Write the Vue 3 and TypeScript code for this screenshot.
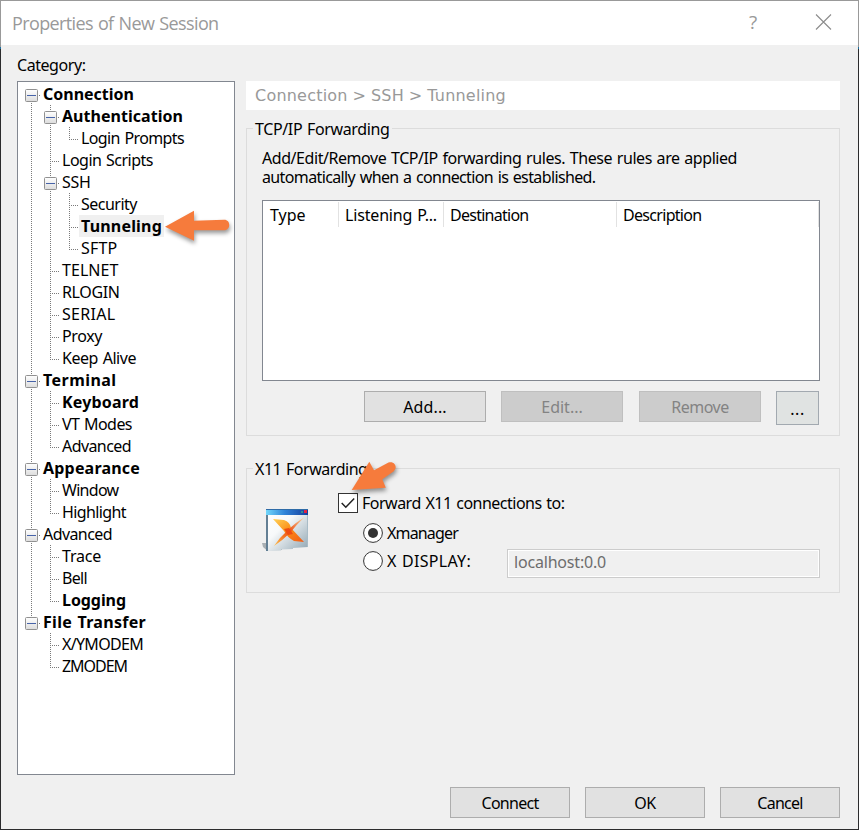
<script setup lang="ts">
import { computed } from 'vue'

interface TreeItem {
  label: string
  level: number
  width: number
  bold?: boolean
  selected?: boolean
}

interface Guide {
  up: boolean
  down: boolean
  branch: boolean
}

// Spreads the letters of a label so that it takes up the given width.
const vFit = {
  mounted(el: HTMLElement, binding: { value: number }) {
    const natural = el.getBoundingClientRect().width
    const count = (el.textContent ?? '').length
    el.style.letterSpacing = `${(binding.value - 0.5 - natural) / count}px`
  },
}

const items: TreeItem[] = [
  { label: 'Connection', level: 0, width: 91.5, bold: true },
  { label: 'Authentication', level: 1, width: 121.5, bold: true },
  { label: 'Login Prompts', level: 2, width: 103.5 },
  { label: 'Login Scripts', level: 1, width: 91.5 },
  { label: 'SSH', level: 1, width: 29 },
  { label: 'Security', level: 2, width: 56.5 },
  { label: 'Tunneling', level: 2, width: 81.5, bold: true, selected: true },
  { label: 'SFTP', level: 2, width: 37 },
  { label: 'TELNET', level: 1, width: 57 },
  { label: 'RLOGIN', level: 1, width: 58 },
  { label: 'SERIAL', level: 1, width: 54 },
  { label: 'Proxy', level: 1, width: 40.5 },
  { label: 'Keep Alive', level: 1, width: 74.5 },
  { label: 'Terminal', level: 0, width: 74, bold: true },
  { label: 'Keyboard', level: 1, width: 77.5, bold: true },
  { label: 'VT Modes', level: 1, width: 70.5 },
  { label: 'Advanced', level: 1, width: 69.5 },
  { label: 'Appearance', level: 0, width: 97.5, bold: true },
  { label: 'Window', level: 1, width: 57 },
  { label: 'Highlight', level: 1, width: 64.5 },
  { label: 'Advanced', level: 0, width: 69.5 },
  { label: 'Trace', level: 1, width: 39.5 },
  { label: 'Bell', level: 1, width: 25.5 },
  { label: 'Logging', level: 1, width: 64.5, bold: true },
  { label: 'File Transfer', level: 0, width: 103.5, bold: true },
  { label: 'X/YMODEM', level: 1, width: 81.5 },
  { label: 'ZMODEM', level: 1, width: 65.5 },
]

function continues(index: number, level: number): boolean {
  for (let i = index + 1; i < items.length; i++) {
    if (items[i].level < level) return false
    if (items[i].level === level) return true
  }
  return false
}

const rows = computed(() =>
  items.map((item, index) => {
    const guides: Guide[] = []
    for (let level = 0; level <= item.level; level++) {
      const more = continues(index, level)
      const own = level === item.level
      guides.push({ up: own ? index > 0 : more, down: more, branch: own })
    }
    const next = items[index + 1]
    return { ...item, guides, parent: !!next && next.level > item.level }
  }),
)

const columns = [
  { label: 'Type', width: 36, cls: 'c-type' },
  { label: 'Listening P...', width: 92.5, cls: 'c-port' },
  { label: 'Destination', width: 79, cls: 'c-dest' },
  { label: 'Description', width: 79, cls: 'c-desc' },
]
</script>

<template>
  <div class="dialog">
    <header class="titlebar">
      <span class="title"><span v-fit="207" class="t">Properties of New Session</span></span>
      <span class="help">?</span>
      <svg class="close" width="17" height="17" viewBox="0 0 17 17">
        <path d="M1 .5L16 15.5M16 .5L1 15.5" stroke="#8c8c8c" stroke-width="1.1" fill="none" />
      </svg>
    </header>

    <div class="category"><span v-fit="69" class="t">Category:</span></div>

    <main class="content">
      <div class="tree">
        <div v-for="(row, i) in rows" :key="i" class="row">
          <svg v-for="(g, j) in row.guides" :key="j" class="guide" width="19" height="22" viewBox="0 0 19 22">
            <g stroke="#7a7a7a" stroke-width="1" stroke-dasharray="1 1">
              <path v-if="g.up" d="M9.5 0V12" />
              <path v-if="g.down" d="M9.5 12V22" />
              <path v-if="g.branch" d="M9 12.5H18" />
            </g>
            <g v-if="g.branch && row.parent">
              <rect x="2" y="5" width="15" height="15" fill="#fff" />
              <rect x="3.5" y="6.5" width="12" height="12" rx="1" fill="url(#boxfill)" stroke="#919191" />
              <path d="M5 12.5H14" stroke="#4763a8" />
              <path d="M17 12.5H18" stroke="#7a7a7a" />
            </g>
          </svg>
          <span class="label" :class="{ bold: row.bold, selected: row.selected }"><span v-fit="row.width" class="t">{{ row.label }}</span></span>
        </div>
        <svg class="arrow arrow-tree" width="76" height="44" viewBox="160 206 76 44">
          <path d="M165 226.7L194 210.8V220.7L224 219.8C231 219.6 231 230.2 224 230.2H194V240.8Z" />
        </svg>
      </div>

      <section class="page">
        <div class="crumbs"><span v-fit="251.5" class="t">Connection &gt; SSH &gt; Tunneling</span></div>

        <fieldset class="group tcp">
          <legend><span v-fit="135" class="t">TCP/IP Forwarding</span></legend>
          <div class="desc">
            <div class="line"><span v-fit="475.5" class="t">Add/Edit/Remove TCP/IP forwarding rules. These rules are applied</span></div>
            <div class="line"><span v-fit="334" class="t">automatically when a connection is established.</span></div>
          </div>
          <div class="list">
            <div class="head">
              <div v-for="c in columns" :key="c.label" class="col" :class="c.cls">
                <span v-fit="c.width" class="t">{{ c.label }}</span>
              </div>
            </div>
          </div>
          <div class="actions">
            <button class="btn"><span v-fit="44" class="t">Add...</span></button>
            <button class="btn off"><span v-fit="42" class="t">Edit...</span></button>
            <button class="btn off remove"><span v-fit="58" class="t">Remove</span></button>
            <button class="btn more"><span v-fit="15" class="t">...</span></button>
          </div>
        </fieldset>

        <fieldset class="group x11">
          <legend><span v-fit="113" class="t">X11 Forwarding</span></legend>
          <div class="x11-body">
            <svg class="xicon" width="48" height="45" viewBox="0 0 48 45">
              <defs>
                <linearGradient id="bar" x1="0" x2="1">
                  <stop offset="0" stop-color="#72d8fb" /><stop offset=".45" stop-color="#2f83d8" /><stop offset="1" stop-color="#153f9c" />
                </linearGradient>
                <linearGradient id="pane" x1="0" y1="0" x2="1" y2="1">
                  <stop offset="0" stop-color="#fff" /><stop offset=".4" stop-color="#f7f9fa" /><stop offset="1" stop-color="#8fa5b2" />
                </linearGradient>
                <linearGradient id="cross" x1="0" y1="0" x2="1" y2="1">
                  <stop offset="0" stop-color="#ffd257" /><stop offset=".5" stop-color="#fa8b16" /><stop offset="1" stop-color="#f25b16" />
                </linearGradient>
                <linearGradient id="thin" x1="1" y1="0" x2="0" y2="1">
                  <stop offset="0" stop-color="#f7dfb0" /><stop offset=".5" stop-color="#ed4d11" /><stop offset="1" stop-color="#ffc34e" />
                </linearGradient>
              </defs>
              <path d="M0 35H7V41L20 40V42L5 42.5L1 39Z" fill="#a9afb3" />
              <path d="M4 1H46V39L31 40V41L19 41.5V42.5L4 43Z" fill="url(#pane)" />
              <path d="M4 1H6V43H4Z" fill="#637f94" />
              <path d="M45 7H46V39H45Z" fill="#a9bcc7" />
              <path d="M4 1H46V7H4Z" fill="url(#bar)" />
              <path d="M4 1H46V2H4Z" fill="#2e6ba7" />
              <path d="M39 3H41V5H39Z" fill="#338e92" />
              <path d="M42 2H45V5H42Z" fill="#e02443" />
              <path d="M11 11L22 12Q28 14 29 20L42 34L32 33Q25 29 22 23Z" fill="url(#cross)" />
              <path d="M43 9Q34 17 29 24Q21 32 12 38Q18 29 25 23Q34 14 43 9Z" fill="url(#thin)" />
              <path d="M22 21L27 20L31 26L26 27Z" fill="#ee4c12" />
            </svg>
            <div class="options">
              <label class="check">
                <svg width="20" height="20" viewBox="0 0 20 20">
                  <rect x=".5" y=".5" width="19" height="19" fill="#fff" stroke="#333" />
                  <path d="M3.7 10L7.8 14.2L16.2 5.5" fill="none" stroke="#222" stroke-width="1.5" />
                </svg>
                <span v-fit="203" class="t">Forward X11 connections to:</span>
              </label>
              <label class="radio first">
                <svg width="20" height="20" viewBox="0 0 20 20">
                  <circle cx="10" cy="10" r="9.4" fill="#fff" stroke="#333" /><circle cx="10" cy="10" r="5" fill="#333" />
                </svg>
                <span v-fit="71.5" class="t">Xmanager</span>
              </label>
              <div class="display">
                <label class="radio">
                  <svg width="20" height="20" viewBox="0 0 20 20">
                    <circle cx="10" cy="10" r="9.4" fill="#fff" stroke="#333" />
                  </svg>
                  <span v-fit="84.5" class="t">X DISPLAY:</span>
                </label>
                <div class="field"><span v-fit="92.5" class="t">localhost:0.0</span></div>
              </div>
            </div>
          </div>
          <svg class="arrow arrow-check" width="56" height="46" viewBox="348 456 56 46">
            <path d="M351.7 490L369.3 461.7L374 470.3L388.5 462.6C394 460.3 398.5 467 393.5 471.5L382.3 479.2L385.8 487.7Z" />
          </svg>
        </fieldset>
      </section>
    </main>

    <footer class="footer">
      <button class="btn"><span v-fit="57.5" class="t">Connect</span></button>
      <button class="btn"><span v-fit="22" class="t">OK</span></button>
      <button class="btn"><span v-fit="46" class="t">Cancel</span></button>
    </footer>

    <svg width="0" height="0" class="defs">
      <defs>
        <linearGradient id="boxfill" x1="0" y1="0" x2="0" y2="1">
          <stop offset="0" stop-color="#fff" /><stop offset="1" stop-color="#dcdcdc" />
        </linearGradient>
      </defs>
    </svg>
  </div>
</template>

<style>
body {
  margin: 0;
  background: #f0f0f0;
}
</style>

<style scoped>
.dialog {
  box-sizing: border-box;
  display: flex;
  flex-direction: column;
  width: 859px;
  height: 830px;
  overflow: hidden;
  position: relative;
  border: 1px solid #2b2b2d;
  border-image: linear-gradient(#999 0 15px, #999 47px, #1d6f9f 47px 49px, #2b2b2d 49px) 1;
  background: #f0f0f0;
  color: #000;
  font: 16px/19px "Noto Sans", "Open Sans", sans-serif;
  word-spacing: 1px;
}
.t {
  display: inline-block;
  white-space: pre;
}
.defs {
  position: absolute;
}
.titlebar {
  display: flex;
  align-items: center;
  flex: none;
  height: 44px;
  box-sizing: border-box;
  background: #fff;
  color: #999;
  padding: 0 26px 1px 11px;
}
.title {
  flex: 1;
  padding-top: 1px;
  font: 18px/24px "Open Sans", "Noto Sans", sans-serif;
}
.help {
  width: 12px;
  margin-right: 56px;
  text-align: center;
  font-family: "Open Sans", sans-serif;
  font-size: 19px;
}
.category {
  flex: none;
  height: 36px;
  padding: 11px 0 0 16px;
  box-sizing: border-box;
}
.content {
  display: flex;
  gap: 11px;
  padding: 0 18px 0 16px;
}
.tree {
  box-sizing: border-box;
  flex: none;
  position: relative;
  width: 218px;
  height: 694px;
  padding: 1px 4px;
  border: 1px solid #828790;
  background: #fff;
}
.row {
  display: flex;
  height: 22px;
}
.guide {
  display: block;
  flex: none;
}
.label {
  padding: 0 2px;
  line-height: 22px;
}
.bold {
  font-weight: 700;
}
.selected {
  background: #f0f0f0;
}
.arrow {
  position: absolute;
  fill: #f67b3c;
  filter: drop-shadow(1px 3px 2px rgba(0, 0, 0, 0.4));
}
.arrow-tree {
  left: 142px;
  top: 124px;
}
.page {
  flex: 1;
}
.crumbs {
  height: 29px;
  padding-left: 9px;
  background: #fff;
  color: #999;
  font: 16px/30px "DejaVu Sans", sans-serif;
  word-spacing: -0.5px;
}
.group {
  position: relative;
  box-sizing: border-box;
  margin: 0;
  min-width: 0;
  border: 1px solid #dcdcdc;
  padding: 0 19px 0 15px;
}
.group legend {
  margin-left: -9px;
  padding: 0 2px;
  height: 19px;
  line-height: 21px;
}
.tcp {
  height: 317px;
  margin-top: 9px;
}
.desc {
  padding: 11px 0 13px;
}
.line {
  height: 19px;
}
.list {
  box-sizing: border-box;
  width: 558px;
  height: 181px;
  border: 1px solid #828790;
  background: #fff;
}
.head {
  display: flex;
  padding-top: 1px;
}
.col {
  box-sizing: border-box;
  height: 25px;
  padding-left: 6px;
  line-height: 26px;
  border-right: 1px solid #e2e2e2;
}
.c-type {
  width: 76px;
  padding-left: 7px;
}
.c-port {
  width: 105px;
}
.c-dest {
  width: 173px;
}
.c-desc {
  width: 202px;
}
.actions {
  display: flex;
  gap: 15px;
  margin: 10px 0 0 102px;
}
.btn {
  box-sizing: border-box;
  width: 122px;
  height: 31px;
  padding: 2px 0 0;
  border: 1px solid #adadad;
  background: #e1e1e1;
  color: #000;
  font: inherit;
}
.off {
  border-color: #bfbfbf;
  background: #ccc;
  color: #838383;
}
.remove {
  margin-left: 1px;
}
.more {
  width: 43px;
  height: 34px;
  padding-top: 3px;
  border-color: #a2a9b0;
  background: #e0e3e2;
}
.x11 {
  height: 134px;
  margin-top: 23px;
}
.x11-body {
  display: flex;
}
.xicon {
  flex: none;
  margin-top: 30px;
}
.options {
  flex: 1;
  margin: 15px 0 0 28px;
}
.check,
.radio {
  display: flex;
  align-items: center;
  height: 20px;
  gap: 4px;
}
.radio {
  margin-left: 25px;
}
.first {
  margin-top: 10px;
}
.display {
  display: flex;
  justify-content: space-between;
  margin: 8px 0 0;
}
.field {
  box-sizing: border-box;
  width: 313px;
  height: 29px;
  margin-top: -2px;
  padding-left: 6px;
  border: 1px solid #ccc;
  box-shadow: inset 0 0 0 1px #fff;
  color: #6d6d6d;
  line-height: 25px;
}
.arrow-check {
  left: 101px;
  top: -22px;
}
.footer {
  display: flex;
  justify-content: flex-end;
  gap: 15px;
  padding: 12px 18px 0 0;
}
.footer .btn {
  width: 120px;
}
</style>
